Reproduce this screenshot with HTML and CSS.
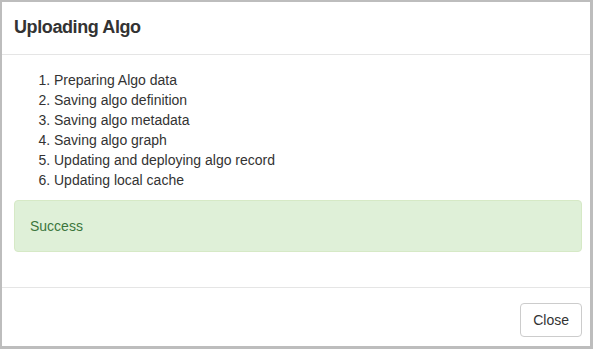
FILE: index.html
```html
<!DOCTYPE html>
<html lang="en">
<head>
    <meta charset="UTF-8">
    <title>Uploading Algo</title>
    <link rel="stylesheet" href="styles.css">
</head>
<body>
    <div class="modal">
        <div class="modal-header">
            <h4 class="modal-title">Uploading Algo</h4>
        </div>
        <div class="modal-body">
            <ol class="steps">
                <li>Preparing Algo data</li>
                <li>Saving algo definition</li>
                <li>Saving algo metadata</li>
                <li>Saving algo graph</li>
                <li>Updating and deploying algo record</li>
                <li>Updating local cache</li>
            </ol>
            <div class="alert alert-success">Success</div>
        </div>
        <div class="modal-footer">
            <button type="button" class="btn">Close</button>
        </div>
    </div>
</body>
</html>
```

FILE: styles.css
```css
* {
    box-sizing: border-box;
}

html, body {
    margin: 0;
    height: 349px;
}

body {
    background: #bdbdbd;
    padding: 2px 3px 3px 2px;
    font-family: "Liberation Sans", Arial, sans-serif;
    font-size: 14px;
    line-height: 20px;
    color: #333;
}

.modal {
    background: #fff;
    height: 100%;
    overflow: hidden;
}

.modal-header {
    padding: 15px 8px 16px 12px;
    border-bottom: 1px solid #e5e5e5;
}

.modal-title {
    margin: 0;
    font-size: 18px;
    line-height: 21px;
    font-weight: bold;
    letter-spacing: -0.4px;
}

.modal-body {
    padding: 15px 8px 15px 12px;
}

.steps {
    margin: 0 0 10px;
    padding-left: 40px;
}

.alert {
    padding: 15px;
    margin-bottom: 20px;
    border: 1px solid transparent;
    border-radius: 4px;
}

.alert-success {
    background: #dff0d8;
    border-color: #d6e9c6;
    color: #3c763d;
}

.modal-footer {
    padding: 15px 8px 15px 12px;
    border-top: 1px solid #e5e5e5;
    text-align: right;
}

.btn {
    font-family: inherit;
    font-size: 14px;
    line-height: 20px;
    padding: 6px 12px;
    color: #333;
    background: #fff;
    border: 1px solid #ccc;
    border-radius: 4px;
    cursor: pointer;
}
```
